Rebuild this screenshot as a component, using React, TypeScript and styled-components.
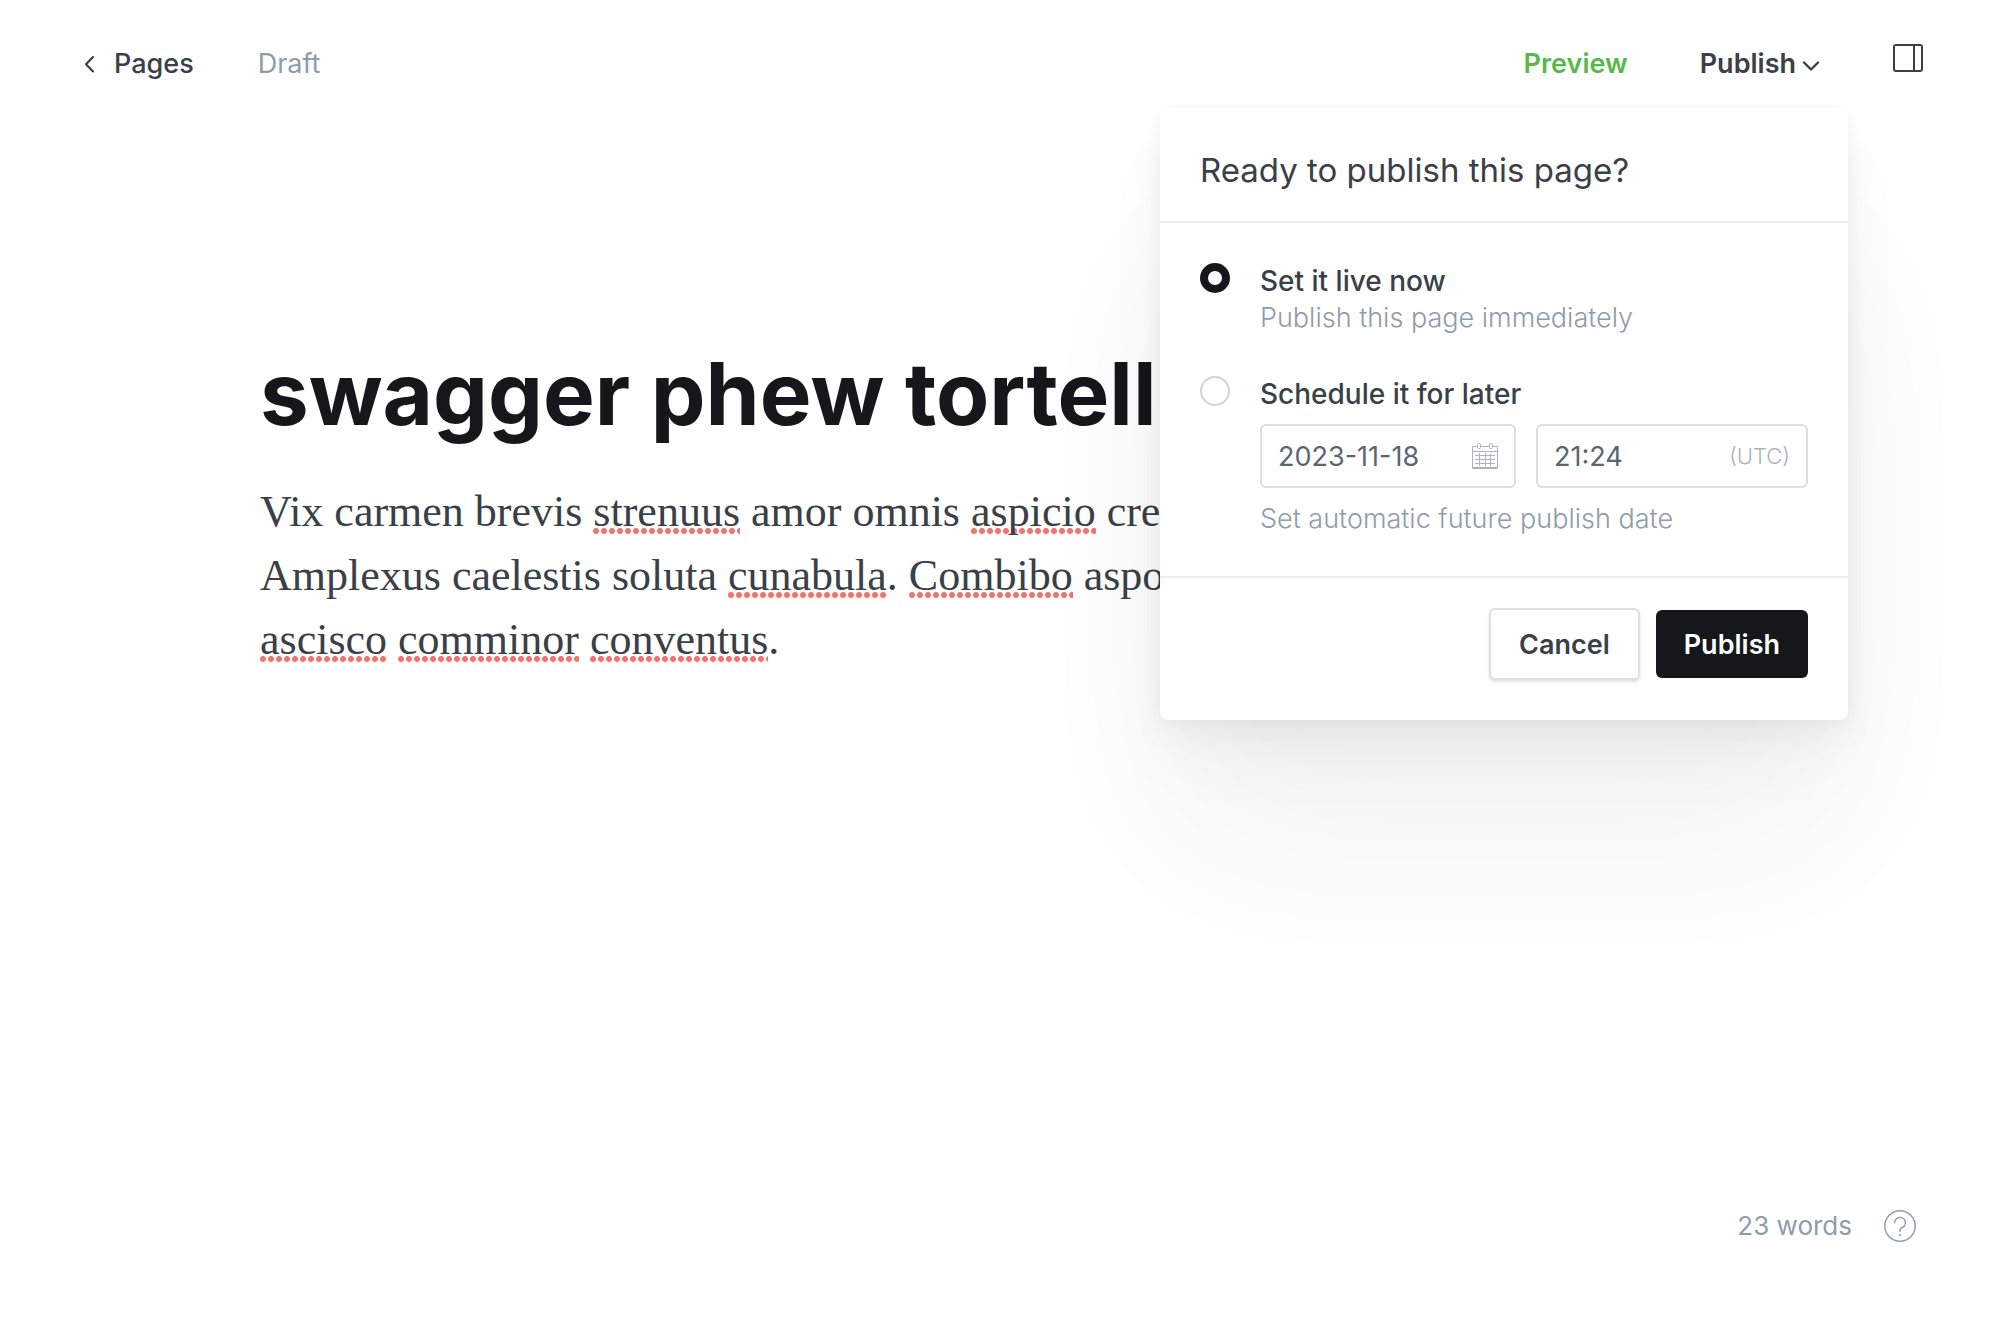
import React, { useState } from "react";
import styled, { createGlobalStyle, css } from "styled-components";

const ink = "#15171a";
const text = "#394047";
const muted = "#8e9cac";
const sans = `Inter, "Liberation Sans", sans-serif`;
const serif = `"Liberation Serif", serif`;

const GlobalStyle = createGlobalStyle`
  *, *::before, *::after { box-sizing: border-box; }
  body { margin: 0; background: #fff; color: ${text}; font-family: ${sans}; font-size: 27px; }
  button, input { font-family: inherit; font-size: inherit; }
  button { background: none; border: 0; padding: 0; color: inherit; cursor: pointer; }
`;

const Page = styled.div`
  display: flex;
  flex-direction: column;
  min-height: 100vh;
  overflow: hidden;
`;

const Header = styled.header`
  display: flex;
  align-items: flex-start;
  justify-content: space-between;
  padding: 44px 76px 24px 84px;
  line-height: 40px;
`;

const Group = styled.div<{ $gap: number }>`
  display: flex;
  align-items: flex-start;
  gap: ${(p) => p.$gap}px;
`;

const BackLink = styled.a`
  display: flex;
  align-items: center;
  gap: 18px;
  color: ${text};
  font-weight: 500;
  text-decoration: none;
`;

const Status = styled.span`
  color: ${muted};
`;

const NavButton = styled.button<{ $accent?: boolean }>`
  display: flex;
  align-items: center;
  gap: 6px;
  line-height: 40px;
  font-weight: 600;
  ${(p) => p.$accent && css`color: #58b84a;`}
`;

const IconButton = styled.button`
  display: flex;
`;

const MenuAnchor = styled.div`
  position: relative;
`;

const Popover = styled.form`
  position: absolute;
  z-index: 1;
  top: calc(100% + 24px);
  right: -28px;
  width: 688px;
  border-radius: 8px;
  background: #fff;
  box-shadow:
    0 0 14px rgba(0, 0, 0, 0.04),
    0 16px 32px rgba(0, 0, 0, 0.04),
    0 45px 70px rgba(0, 0, 0, 0.03),
    0 130px 190px rgba(0, 0, 0, 0.05);
`;

const PopoverTitle = styled.h2`
  margin: 0;
  padding: 42px 40px 31px;
  border-bottom: 2px solid #ececec;
  font-size: 33px;
  font-weight: 400;
  line-height: 40px;
`;

const Options = styled.div`
  display: flex;
  flex-direction: column;
  gap: 39px;
  padding: 40px 40px 38px;
`;

const Option = styled.div`
  display: grid;
  grid-template-columns: 30px minmax(0, 1fr);
  column-gap: 30px;
`;

const Radio = styled.input`
  appearance: none;
  width: 30px;
  height: 30px;
  margin: 0;
  border: 2px solid #ced4d9;
  border-radius: 50%;
  background: #fff;

  &:checked {
    border: 8px solid ${ink};
  }
`;

const OptionLabel = styled.label`
  display: block;
  font-size: 28px;
  font-weight: 500;
  line-height: 36px;
`;

const Hint = styled.p`
  margin: 0;
  color: ${muted};
  font-weight: 300;
  line-height: 38px;
`;

const Fields = styled.div`
  display: grid;
  grid-template-columns: minmax(0, 256fr) minmax(0, 272fr);
  gap: 20px;
  margin: 12px 0;
`;

const Field = styled.label`
  display: flex;
  align-items: center;
  height: 64px;
  padding: 0 16px;
  border: 2px solid #dddedf;
  border-radius: 6px;
`;

const FieldInput = styled.input`
  flex: 1;
  min-width: 0;
  width: 100%;
  padding: 0;
  border: 0;
  outline: 0;
  background: none;
  color: #5a6672;
`;

const Zone = styled.span`
  color: #abb4be;
  font-size: 22px;
  font-weight: 300;
`;

const Actions = styled.div`
  display: flex;
  align-items: center;
  justify-content: flex-end;
  gap: 16px;
  padding: 30px 40px 40px;
  border-top: 2px solid #ececec;
`;

const ActionButton = styled.button<{ $primary?: boolean }>`
  height: 68px;
  padding: 0 28px;
  border-radius: 6px;
  font-weight: 600;
  ${(p) =>
    p.$primary
      ? css`
          background: ${ink};
          color: #fff;
        `
      : css`
          height: 72px;
          border: 2px solid #dde1e5;
          background: #fff;
          box-shadow: 0 2px 3px rgba(0, 0, 0, 0.12);
        `}
`;

const Editor = styled.main`
  width: 100%;
  max-width: 1480px;
  margin: 0 auto;
  padding-top: 234px;
`;

const Title = styled.h1`
  margin: 0 0 34px;
  color: ${ink};
  font-size: 87px;
  font-weight: 700;
  line-height: 104px;
  white-space: nowrap;
`;

const Body = styled.p`
  margin: 0;
  font-family: ${serif};
  font-size: 44px;
  line-height: 64px;
  white-space: nowrap;
`;

const Misspelt = styled.span`
  background: radial-gradient(circle at 3px 3px, #f1776c 2.6px, transparent 3.4px) left bottom 2px / 8px 6px repeat-x;
`;

const StatusBar = styled.footer`
  display: flex;
  align-items: center;
  justify-content: flex-end;
  gap: 32px;
  margin-top: auto;
  padding: 0 84px 74px;
  color: ${muted};
  font-size: 26px;
  line-height: 40px;
`;

const ChevronLeft = () => (
  <svg width="12" height="18" viewBox="0 0 12 18" fill="none" stroke={text} strokeWidth="2.2" strokeLinecap="round" strokeLinejoin="round" aria-hidden="true">
    <path d="M9 2 2 9.2 9 16.4" />
  </svg>
);

const ChevronDown = () => (
  <svg width="18" height="16" viewBox="0 0 18 16" fill="none" stroke={text} strokeWidth="2.4" strokeLinecap="round" strokeLinejoin="round" aria-hidden="true">
    <path d="M2 6.500l7 7 7-7" />
  </svg>
);

const SidebarIcon = () => (
  <svg width="32" height="28" viewBox="0 0 32 28" fill="none" stroke={text} strokeWidth="2" aria-hidden="true">
    <rect x="2" y="1" width="28" height="26" rx="2" />
    <path d="M22 1v26" />
  </svg>
);

const CalendarIcon = () => (
  <svg width="26" height="26" viewBox="0 0 26 26" fill="none" stroke="#abb4be" strokeWidth="1" aria-hidden="true">
    <path d="M5 3.500H.5v22h25v-22H21M9 3.500h8M.5 8.500h25M.5 24.500h25" />
    <rect x="5.500" y=".5" width="3" height="5" rx="1" />
    <rect x="17.500" y=".5" width="3" height="5" rx="1" />
    <path d="M3 12.500h20M3 16.500h20M3 20.500h20M7.500 10v13M13.500 10v13M18.500 10v13" />
  </svg>
);

const HelpIcon = () => (
  <svg width="32" height="32" viewBox="0 0 32 32" fill="none" stroke={muted} strokeWidth="1.500" strokeLinecap="round" strokeLinejoin="round" aria-hidden="true">
    <circle cx="16" cy="16" r="15.200" />
    <path d="M10.600 12.800a5.400 5.400 0 1 1 7.400 5c-1.300.5-2 1.400-2 2.700v.8" />
    <circle cx="16" cy="25" r=".6" fill={muted} strokeWidth="1" />
  </svg>
);

export default function App() {
  const [mode, setMode] = useState("now");
  const [date, setDate] = useState("2023-11-18");
  const [time, setTime] = useState("21:24");

  return (
    <Page>
      <GlobalStyle />
      <Header>
        <Group $gap={64}>
          <BackLink href="#pages">
            <ChevronLeft />
            Pages
          </BackLink>
          <Status>Draft</Status>
        </Group>
        <Group $gap={72}>
          <NavButton type="button" $accent>
            Preview
          </NavButton>
          <MenuAnchor>
            <NavButton type="button" aria-expanded="true">
              Publish
              <ChevronDown />
            </NavButton>
            <Popover onSubmit={(e) => e.preventDefault()}>
              <PopoverTitle>Ready to publish this page?</PopoverTitle>
              <Options>
                <Option>
                  <Radio type="radio" id="now" name="mode" checked={mode === "now"} onChange={() => setMode("now")} />
                  <div>
                    <OptionLabel htmlFor="now">Set it live now</OptionLabel>
                    <Hint>Publish this page immediately</Hint>
                  </div>
                </Option>
                <Option>
                  <Radio type="radio" id="later" name="mode" checked={mode === "later"} onChange={() => setMode("later")} />
                  <div>
                    <OptionLabel htmlFor="later">Schedule it for later</OptionLabel>
                    <Fields>
                      <Field>
                        <FieldInput aria-label="Publish date" value={date} onChange={(e) => setDate(e.target.value)} />
                        <CalendarIcon />
                      </Field>
                      <Field>
                        <FieldInput aria-label="Publish time" value={time} onChange={(e) => setTime(e.target.value)} />
                        <Zone>(UTC)</Zone>
                      </Field>
                    </Fields>
                    <Hint>Set automatic future publish date</Hint>
                  </div>
                </Option>
              </Options>
              <Actions>
                <ActionButton type="button">Cancel</ActionButton>
                <ActionButton type="submit" $primary>
                  Publish
                </ActionButton>
              </Actions>
            </Popover>
          </MenuAnchor>
          <IconButton type="button" aria-label="Settings">
            <SidebarIcon />
          </IconButton>
        </Group>
      </Header>

      <Editor>
        <Title>swagger phew tortellini</Title>
        <Body>
          Vix carmen brevis <Misspelt>strenuus</Misspelt> amor omnis <Misspelt>aspicio</Misspelt> cresco
          <br />
          Amplexus caelestis soluta <Misspelt>cunabula</Misspelt>. <Misspelt>Combibo</Misspelt> asporto
          <br />
          <Misspelt>ascisco</Misspelt> <Misspelt>comminor</Misspelt> <Misspelt>conventus</Misspelt>.
        </Body>
      </Editor>

      <StatusBar>
        <span>23 words</span>
        <IconButton type="button" aria-label="Help">
          <HelpIcon />
        </IconButton>
      </StatusBar>
    </Page>
  );
}
